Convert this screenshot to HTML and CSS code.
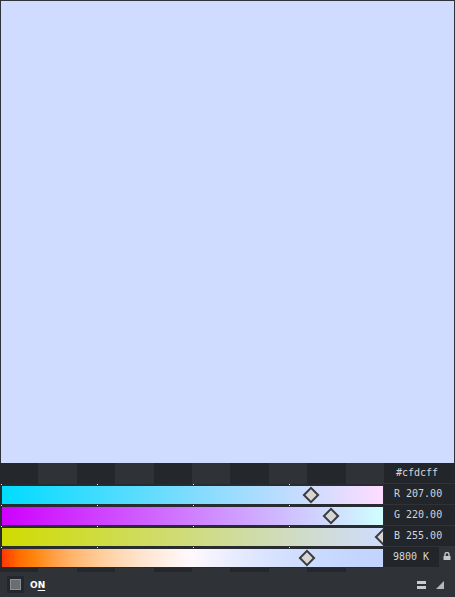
FILE: index.html
```html
<!DOCTYPE html>
<html>
<head>
<meta charset="utf-8">
<link rel="stylesheet" href="styles.css">
</head>
<body>
<div class="app">
  <div class="swatch"></div>
  <div class="panel">
    <div class="left">
      <div class="palette">
        <span class="cell d"></span><span class="cell l"></span><span class="cell d"></span><span class="cell l"></span><span class="cell d"></span><span class="cell l"></span><span class="cell d"></span><span class="cell l"></span><span class="cell d"></span><span class="cell l"></span>
      </div>
      <div class="gap first"><div class="ticks"><i></i><i></i><i></i><i></i></div></div>
      <div class="slider r"><span class="knob" style="left: 309.3px"></span></div>
      <div class="gap"><div class="ticks"><i></i><i></i><i></i><i></i></div></div>
      <div class="slider g"><span class="knob" style="left: 328.7px"></span></div>
      <div class="gap"><div class="ticks"><i></i><i></i><i></i><i></i></div></div>
      <div class="slider b"><span class="knob" style="left: 381px"></span></div>
      <div class="gap"><div class="ticks"><i></i><i></i><i></i><i></i></div></div>
      <div class="slider k"><span class="knob" style="left: 304.8px"></span></div>
      <div class="gap last"></div>
      <div class="strip">
        <span class="cell d"></span><span class="cell"></span><span class="cell d"></span><span class="cell"></span><span class="cell d"></span><span class="cell"></span><span class="cell d"></span><span class="cell"></span><span class="cell d"></span><span class="cell"></span>
      </div>
    </div>
    <div class="right">
      <div class="box hex">#cfdcff</div>
      <div class="box val">R 207.00</div>
      <div class="box val">G 220.00</div>
      <div class="box val">B 255.00</div>
      <div class="krow">
        <div class="box kval">9800 K</div>
        <svg class="lock" width="8" height="8" viewBox="0 0 8 8"><path d="M2 4V2.5a2 2 0 0 1 4 0V4" fill="none" stroke="#c4c8cc" stroke-width="1.4"/><rect x="0.5" y="4" width="7" height="4" fill="#c4c8cc"/></svg>
      </div>
    </div>
  </div>
  <div class="bottom">
    <div class="check"><span class="inner"></span></div>
    <span class="on">O<u>N</u></span>
    <div class="spacer"></div>
    <svg class="menu" width="9" height="8" viewBox="0 0 9 8"><rect x="0" y="0" width="9" height="3" fill="#c8ccd0"/><rect x="0" y="5" width="9" height="3" fill="#c8ccd0"/></svg>
    <svg class="grip" width="8" height="8" viewBox="0 0 8 8"><polygon points="8,0 8,8 0,8" fill="#b4b8bc"/></svg>
  </div>
</div>
</body>
</html>
```
FILE: styles.css
```css
html, body {
  margin: 0;
  padding: 0;
  background: #2f3337;
}
.app {
  width: 455px;
  height: 597px;
  overflow: hidden;
  display: flex;
  flex-direction: column;
  background: #2f3337;
}
.swatch {
  margin: 1px 1px 0 1px;
  height: 462px;
  background: #cfdcff;
}
.panel {
  display: flex;
  height: 109px;
}
.left {
  width: 384px;
  display: flex;
  flex-direction: column;
  background: #282b2f;
}
.palette, .strip {
  display: grid;
  grid-template-columns: repeat(10, 1fr);
  height: 21px;
}
.strip {
  height: 4px;
  background: #2f3337;
}
.cell.d { background: #24272b; }
.cell.l { background: #2f3337; }
.gap {
  height: 3px;
  display: flex;
  flex-direction: column;
  justify-content: center;
}
.gap.first {
  height: 2px;
  justify-content: flex-start;
}
.gap.last {
  height: 1px;
}
.ticks {
  display: grid;
  grid-template-columns: repeat(4, 96px);
  height: 1px;
  padding-left: 1px;
}
.ticks i {
  display: block;
  width: 1px;
  height: 1px;
  background: #e8eaec;
}
.slider {
  position: relative;
  height: 18px;
  margin: 0 1px 0 2px;
  overflow: hidden;
}
.slider.r { background: linear-gradient(to right, #00dcff, #ffdcff); }
.slider.g { background: linear-gradient(to right, #cf00ff, #cfffff); }
.slider.b { background: linear-gradient(to right, #cfdc00, #cfdcff); }
.slider.k {
  background: linear-gradient(to right,
    #ff3800 0%, #ff6d00 4.5%, #ff8912 9.1%, #ff9f46 13.6%, #ffb46b 18.2%,
    #ffd1a3 27.3%, #ffe4ce 36.4%, #fff3ef 45.5%, #fff9fd 50%, #f5f3ff 54.5%,
    #e3e9ff 63.6%, #d6e1ff 72.7%, #ccdbff 81.8%, #c4d7ff 90.9%, #c3d3ff 100%);
}
.knob {
  position: absolute;
  top: 3px;
  width: 8px;
  height: 8px;
  margin-left: -6px;
  background: #d6d6d6;
  border: 2px solid #3a3b3d;
  transform: rotate(45deg);
}
.right {
  width: 71px;
  display: flex;
  flex-direction: column;
  gap: 1px;
  background: #2f3337;
}
.box {
  height: 20px;
  line-height: 20px;
  background: #222529;
  color: #d2d6da;
  font-family: "DejaVu Sans Mono", monospace;
  font-size: 10px;
  white-space: pre;
  padding-left: 10px;
}
.box.hex { padding-left: 12px; }
.krow {
  display: flex;
  align-items: flex-start;
}
.kval {
  width: 46px;
  padding-left: 9px;
}
.lock {
  margin: 5px 0 0 4px;
}
.bottom {
  flex: 1;
  display: flex;
  align-items: center;
  padding: 0 11px 0 7px;
  background: #2f3337;
}
.check {
  width: 17px;
  height: 17px;
  background: #24272b;
  display: flex;
  align-items: center;
  justify-content: center;
}
.inner {
  width: 9px;
  height: 9px;
  background: #6b6e71;
  border: 1px solid #8c8f92;
}
.on {
  margin-left: 6px;
  font-family: "DejaVu Sans", sans-serif;
  font-weight: bold;
  font-size: 9px;
  color: #ffffff;
}
.on u {
  text-decoration-thickness: 1px;
  text-underline-offset: 2px;
}
.spacer { flex: 1; }
.menu { margin-right: 10px; }
```
